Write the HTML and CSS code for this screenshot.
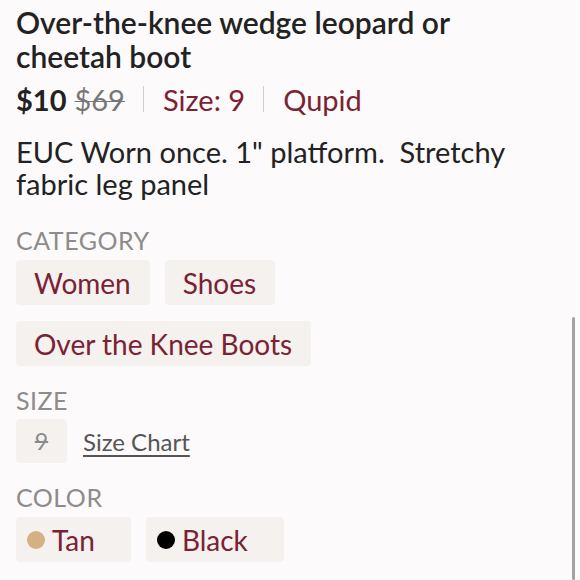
FILE: index.html
```html
<!DOCTYPE html>
<html lang="en">
<head>
<meta charset="utf-8">
<title>Listing</title>
<link rel="stylesheet" href="styles.css">
</head>
<body>
<main class="listing">
  <h1 class="title">Over-the-knee wedge leopard or cheetah boot</h1>
  <div class="price-row">
    <span class="price">$10</span>
    <span class="orig">$69</span>
    <span class="sep"></span>
    <span class="meta">Size: 9</span>
    <span class="sep"></span>
    <span class="meta">Qupid</span>
  </div>
  <p class="desc">EUC Worn once. 1" platform.  Stretchy fabric leg panel</p>

  <section class="section section-first">
    <h2 class="label">CATEGORY</h2>
    <div class="tags">
      <span class="tag">Women</span>
      <span class="tag">Shoes</span>
      <span class="tag">Over the Knee Boots</span>
    </div>
  </section>

  <section class="section">
    <h2 class="label">SIZE</h2>
    <div class="size-row">
      <span class="size-box">9</span>
      <a class="size-chart" href="#">Size Chart</a>
    </div>
  </section>

  <section class="section">
    <h2 class="label">COLOR</h2>
    <div class="tags">
      <span class="tag color-tag"><span class="dot dot-tan"></span>Tan</span>
      <span class="tag color-tag"><span class="dot dot-black"></span>Black</span>
    </div>
  </section>
</main>
<div class="scrollbar"></div>
</body>
</html>
```
FILE: styles.css
```css
html, body {
  margin: 0;
  padding: 0;
  background: #fcfafa;
}
body {
  font-family: Lato, "Noto Sans", sans-serif;
  color: #222222;
}
.listing {
  padding: 5px 16px 0 16px;
}
.title {
  margin: 0;
  font-size: 30px;
  font-weight: 600;
  line-height: 34px;
  color: #222222;
  max-width: 470px;
}
.price-row {
  display: flex;
  align-items: center;
  height: 34px;
  margin-top: 9px;
  font-size: 29px;
}
.price {
  font-weight: 700;
  color: #222222;
}
.orig {
  margin-left: 8px;
  color: #777777;
  text-decoration: line-through;
  text-decoration-thickness: 1px;
}
.sep {
  width: 1px;
  height: 26px;
  background: #cfcfcf;
  margin: 0 19px 0 18px;
}
.meta {
  color: #7a2233;
}
.desc {
  margin: 20px 0 0 0;
  font-size: 29px;
  line-height: 32px;
  white-space: pre-wrap;
  color: #222222;
}
.section {
  margin-top: 19px;
}
.section-first {
  margin-top: 25px;
}
.label {
  margin: 0;
  font-size: 25px;
  font-weight: 400;
  line-height: 30px;
  letter-spacing: 0.5px;
  color: #8d8c8a;
}
.tags {
  display: flex;
  flex-wrap: wrap;
  gap: 16px 15px;
  margin-top: 5px;
}
.tag {
  display: flex;
  align-items: center;
  height: 45px;
  padding: 0 19px 0 18px;
  background: #f4f1ef;
  border-radius: 4px;
  font-size: 28px;
  color: #7a2233;
}
.size-row {
  display: flex;
  align-items: center;
  margin-top: 4px;
}
.size-box {
  display: flex;
  align-items: center;
  justify-content: center;
  width: 51px;
  height: 44px;
  background: #f4f1ef;
  border-radius: 4px;
  font-size: 23px;
  color: #8a8a8a;
  text-decoration: line-through;
}
.size-chart {
  margin-left: 16px;
  font-size: 24px;
  color: #555555;
  text-decoration: underline;
  text-underline-offset: 4px;
}
.color-tag {
  padding: 0 36px 0 11px;
}
.dot {
  width: 18px;
  height: 18px;
  border-radius: 50%;
  margin-right: 7px;
}
.dot-tan {
  background: #d4b083;
}
.dot-black {
  background: #000000;
}
.scrollbar {
  position: fixed;
  right: 5px;
  top: 317px;
  bottom: 0;
  width: 3px;
  border-radius: 2px;
  background: #a3a3a3;
}
```
